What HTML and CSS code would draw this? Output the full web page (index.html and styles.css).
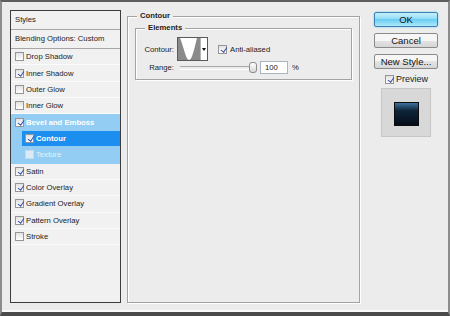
FILE: index.html
```html
<!DOCTYPE html>
<html lang="en">
<head>
  <meta charset="UTF-8">
  <title>Layer Style</title>
  <link rel="stylesheet" href="styles.css">
</head>
<body>
  <div class="dialog">
    <div class="styles-panel">
      <div class="panel-head">Styles</div>
      <div class="panel-head">Blending Options: Custom</div>
      <ul class="effects">
        <li class="effect"><span class="check"></span>Drop Shadow</li>
        <li class="effect"><span class="check on"></span>Inner Shadow</li>
        <li class="effect"><span class="check"></span>Outer Glow</li>
        <li class="effect"><span class="check"></span>Inner Glow</li>
        <li class="effect group active"><span class="check on"></span>Bevel and Emboss</li>
        <li class="effect group sub selected"><span class="check on"></span>Contour</li>
        <li class="effect group sub disabled"><span class="check"></span>Texture</li>
        <li class="effect"><span class="check on"></span>Satin</li>
        <li class="effect"><span class="check on"></span>Color Overlay</li>
        <li class="effect"><span class="check on"></span>Gradient Overlay</li>
        <li class="effect"><span class="check on"></span>Pattern Overlay</li>
        <li class="effect"><span class="check"></span>Stroke</li>
      </ul>
    </div>

    <fieldset class="settings">
      <legend>Contour</legend>
      <fieldset class="elements">
        <legend>Elements</legend>
        <div class="field-row picker-row">
          <span class="field-label">Contour:</span>
          <div class="contour-picker">
            <svg class="contour-thumb" width="22" height="22" viewBox="0 0 22 22">
              <rect width="22" height="22" fill="#8a8a8a"/>
              <path d="M2 0 C6 10 8 22 11 22 C14 22 16 12 19 0 Z" fill="#fff"/>
            </svg>
            <span class="picker-arrow"></span>
          </div>
          <label class="anti-alias"><span class="check on"></span>Anti-aliased</label>
        </div>
        <div class="field-row range-row">
          <span class="field-label">Range:</span>
          <div class="slider"><span class="thumb"></span></div>
          <input class="num" type="text" value="100">
          <span class="unit">%</span>
        </div>
      </fieldset>
    </fieldset>

    <div class="actions">
      <button class="btn default">OK</button>
      <button class="btn">Cancel</button>
      <button class="btn">New Style...</button>
      <label class="preview-toggle"><span class="check on"></span>Preview</label>
      <div class="preview-box"><div class="swatch"></div></div>
    </div>
  </div>
</body>
</html>
```

FILE: styles.css
```css
* {
  box-sizing: border-box;
}

body {
  margin: 0;
  font-family: Tahoma, "Liberation Sans", Arial, sans-serif;
  font-size: 7.7px;
  color: #222;
  background-color: #ececec;
}

.dialog {
  width: 450px;
  height: 316px;
  display: flex;
  align-items: flex-start;
  padding: 8px 10px 0 8px;
  background-color: #ececec;
  border-top: 2px solid #5e5e5e;
  border-left: 2px solid #8c8c8c;
  border-right: 2px solid #8c8c8c;
  border-bottom: 4px solid #4b4b4b;
  box-shadow: inset 0 -2px 0 #fafafa;
}

/* left list of effects */
.styles-panel {
  width: 111px;
  height: 293px;
  flex: none;
  border: 1px solid #3c3c3c;
  background-color: #f1f1f1;
}

.panel-head {
  height: 19px;
  line-height: 18px;
  padding-left: 4px;
  border-bottom: 1px solid #a6a6a6;
}

.effects {
  list-style: none;
  margin: 0;
  padding: 0;
}

.effect {
  height: 16.36px;
  display: flex;
  align-items: center;
  gap: 2px;
  padding-left: 4px;
  border-bottom: 1px solid #fbfbfb;
}

.effect.group {
  background-color: #93cdf4;
  border-bottom-color: #93cdf4;
  color: #fff;
  font-weight: bold;
}

.effect.sub {
  padding-left: 14px;
}

.effect.selected {
  background: linear-gradient(to right, #93cdf4 11px, #1b8ef0 11px);
}

.effect.disabled {
  font-weight: normal;
  color: #e6f1f9;
}

.check {
  position: relative;
  width: 9px;
  height: 9px;
  flex: none;
  border: 1px solid #959595;
  background: linear-gradient(#e2e2e2, #fff);
}

.check.on::after {
  content: "";
  position: absolute;
  left: 2.5px;
  top: 0;
  width: 2.5px;
  height: 5px;
  border: solid #2e48a8;
  border-width: 0 1.3px 1.3px 0;
  transform: rotate(35deg);
}

.disabled .check {
  border-color: #c3dcec;
  background: #dbeaf5;
}

/* middle settings */
fieldset {
  min-width: 0;
  margin: 0;
  border: 1px solid #a3a3a3;
  box-shadow: inset 1px 1px #fff, 1px 1px #fff;
}

legend {
  padding: 0 3px;
  line-height: 10px;
  font-weight: bold;
  background-color: #ececec;
}

.settings {
  width: 233px;
  height: 292px;
  flex: none;
  margin: 1px 0 0 6px;
  padding: 2px 7px 0;
}

.settings > legend {
  margin-left: 2px;
}

.elements {
  padding: 4px 0 5px;
}

.elements > legend {
  margin-left: 9px;
}

.field-row {
  display: flex;
  align-items: center;
}

.field-label {
  width: 38px;
  text-align: right;
}

.picker-row {
  height: 24px;
}

.contour-picker {
  display: flex;
  width: 31px;
  height: 24px;
  margin-left: 3px;
  border: 1px solid #5a5a5a;
  background-color: #fff;
}

.contour-thumb {
  display: block;
}

.picker-arrow {
  flex: 1;
  display: flex;
  align-items: center;
  justify-content: center;
  border-left: 1px solid #b5b5b5;
}

.picker-arrow::before {
  content: "";
  border-top: 3px solid #111;
  border-left: 2px solid transparent;
  border-right: 2px solid transparent;
}

.anti-alias {
  display: flex;
  align-items: center;
  gap: 3px;
  margin-left: 10px;
}

.range-row {
  height: 13px;
}

.slider {
  position: relative;
  width: 77px;
  height: 11px;
  margin-left: 6px;
}

.slider::before {
  content: "";
  position: absolute;
  left: 0;
  right: 4px;
  top: 4px;
  height: 2px;
  border-top: 1px solid #a8a8a8;
  border-bottom: 1px solid #fff;
}

.thumb {
  position: absolute;
  right: 0;
  top: 0;
  width: 8px;
  height: 11px;
  border: 1px solid #8d8d8d;
  border-radius: 3px;
  background: linear-gradient(#fff, #d6d6d6);
}

.num {
  width: 28px;
  height: 13px;
  margin-left: 3px;
  padding: 0 0 0 4px;
  border: 1px solid #a9b4bd;
  background-color: #fff;
  font: inherit;
  color: #222;
}

.unit {
  margin-left: 4px;
}

/* right column */
.actions {
  width: 64px;
  flex: none;
  display: flex;
  flex-direction: column;
  margin: 2px 0 0 14px;
}

.btn {
  height: 15px;
  margin: 0 0 6px;
  padding: 0;
  border: 1px solid #8a8a8a;
  border-radius: 2px;
  background: linear-gradient(#f6f6f6 50%, #e4e4e4 50%, #d6d6d6);
  font-family: Tahoma, "Liberation Sans", Arial, sans-serif;
  font-size: 9.5px;
  color: #111;
}

.btn.default {
  border-color: #3c7fb1;
  background: linear-gradient(#c6f0fd, #8edbf6 50%, #6acdf2 50%, #aee8f9);
  box-shadow: 0 0 2px #5fd0ff;
}

.preview-toggle {
  display: flex;
  align-items: center;
  gap: 2px;
  height: 10px;
  margin-top: -1px;
  padding-left: 11px;
  font-size: 9px;
}

.preview-box {
  display: flex;
  align-items: center;
  justify-content: center;
  width: 50px;
  height: 49px;
  margin: 4px 0 0 7px;
  padding-top: 2px;
  border: 1px solid #c6c6c6;
  background-color: #d8d8d8;
}

.swatch {
  width: 25px;
  height: 24px;
  border: 1px solid #0c0c0c;
  background: linear-gradient(#3d719d, #0e2439 35%, #050d18);
}
```
